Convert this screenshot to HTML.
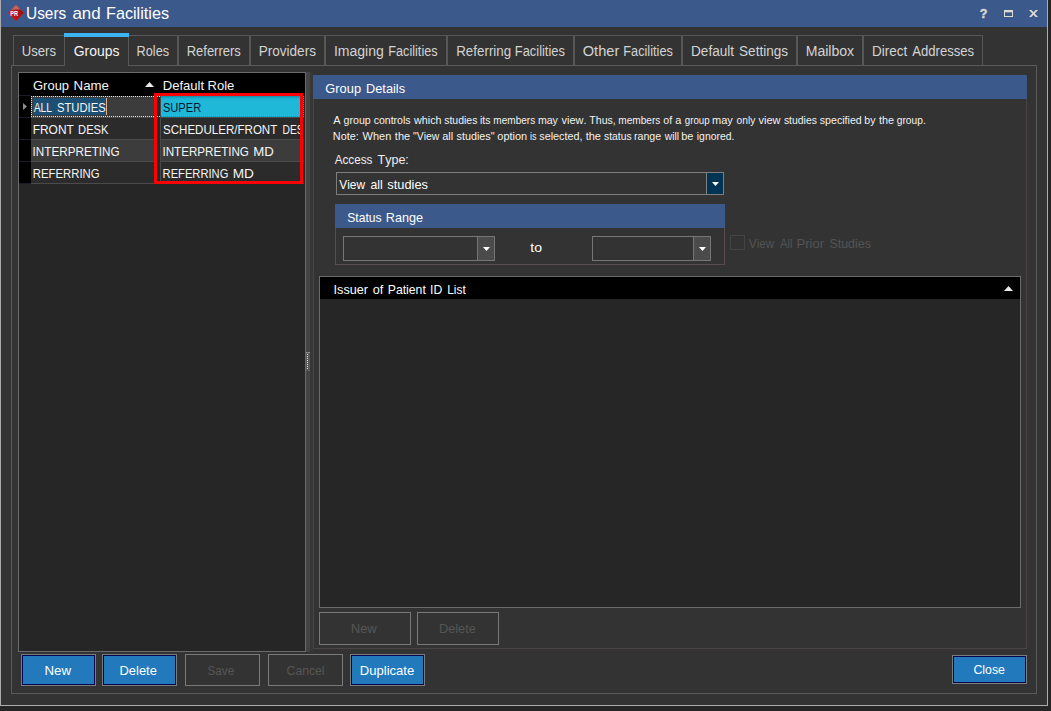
<!DOCTYPE html>
<html><head><meta charset="utf-8"><title>Users and Facilities</title>
<style>
html,body{margin:0;padding:0;background:#262626;}
body{width:1051px;height:711px;position:relative;overflow:hidden;font-family:"Liberation Sans", sans-serif;}
.b{position:absolute;display:block;}
.t{position:absolute;white-space:pre;line-height:20px;font-family:"Liberation Sans", sans-serif;transform-origin:0 0;font-kerning:none;}
</style></head><body>
<div class="b" style="left:0px;top:0px;width:1051px;height:711px;background:#262626;"></div>
<div class="b" style="left:0px;top:0px;width:1048px;height:706px;background:#333333;"></div>
<div class="b" style="left:0px;top:0px;width:1px;height:706px;background:#aaaaaa;"></div>
<div class="b" style="left:1047px;top:0px;width:1px;height:706px;background:#acacac;"></div>
<div class="b" style="left:0px;top:705px;width:1048px;height:1px;background:#acacac;"></div>
<div class="b" style="left:1px;top:0px;width:1046px;height:27px;background:#3c598b;"></div>
<svg class="b" style="left:6px;top:3px" width="20" height="20" viewBox="0 0 20 20"><defs><linearGradient id="g" x1="0" y1="0.6" x2="1" y2="0.4"><stop offset="0" stop-color="#cf1616"/><stop offset="0.5" stop-color="#b51515"/><stop offset="1" stop-color="#941010"/></linearGradient><linearGradient id="g2" x1="0" y1="0" x2="0" y2="1"><stop offset="0" stop-color="#c67878"/><stop offset="1" stop-color="#b45656"/></linearGradient></defs><path d="M10 1.9 L18 9.9 L10 17.9 L2 9.9 Z" fill="url(#g)" stroke="#b33030" stroke-width="0.5" stroke-linejoin="round"/><path d="M10 2.1 L14.3 6.3 L4.8 7.2 Z" fill="url(#g2)"/><text x="8.1" y="12.7" font-family="Liberation Sans, sans-serif" font-weight="700" font-size="6.6" fill="#fff" text-anchor="middle" textLength="7.8" lengthAdjust="spacingAndGlyphs">PR</text></svg>
<svg class="b" style="left:975px;top:5px" width="70" height="18" viewBox="0 0 70 18"><text x="8.5" y="13" font-family="Liberation Sans, sans-serif" font-weight="700" font-size="12.5" fill="#dedad4" stroke="#dedad4" stroke-width="0.35" text-anchor="middle">?</text><rect x="29.5" y="5.5" width="8" height="6" fill="none" stroke="#dedad4" stroke-width="1"/><rect x="29" y="5" width="9" height="2.3" fill="#dedad4"/><path d="M54 5 L56.4 5 L63 12 L60.6 12 Z" fill="#dedad4"/><path d="M63 5 L60.6 5 L54 12 L56.4 12 Z" fill="#dedad4"/></svg>
<div class="b" style="left:11px;top:65px;width:1026px;height:629px;border:1px solid #5a5a5a;box-sizing:border-box;"></div>
<div class="b" style="left:13px;top:35px;width:51px;height:1px;background:#575757;"></div>
<div class="b" style="left:13px;top:35px;width:1px;height:30px;background:#575757;"></div>
<div class="b" style="left:129px;top:35px;width:49px;height:1px;background:#575757;"></div>
<div class="b" style="left:177px;top:35px;width:1px;height:30px;background:#575757;"></div>
<div class="b" style="left:178px;top:35px;width:72px;height:1px;background:#575757;"></div>
<div class="b" style="left:178px;top:35px;width:1px;height:30px;background:#575757;"></div>
<div class="b" style="left:249px;top:35px;width:1px;height:30px;background:#575757;"></div>
<div class="b" style="left:250px;top:35px;width:75px;height:1px;background:#575757;"></div>
<div class="b" style="left:250px;top:35px;width:1px;height:30px;background:#575757;"></div>
<div class="b" style="left:324px;top:35px;width:1px;height:30px;background:#575757;"></div>
<div class="b" style="left:325px;top:35px;width:122px;height:1px;background:#575757;"></div>
<div class="b" style="left:325px;top:35px;width:1px;height:30px;background:#575757;"></div>
<div class="b" style="left:446px;top:35px;width:1px;height:30px;background:#575757;"></div>
<div class="b" style="left:447px;top:35px;width:127px;height:1px;background:#575757;"></div>
<div class="b" style="left:447px;top:35px;width:1px;height:30px;background:#575757;"></div>
<div class="b" style="left:573px;top:35px;width:1px;height:30px;background:#575757;"></div>
<div class="b" style="left:574px;top:35px;width:108px;height:1px;background:#575757;"></div>
<div class="b" style="left:574px;top:35px;width:1px;height:30px;background:#575757;"></div>
<div class="b" style="left:681px;top:35px;width:1px;height:30px;background:#575757;"></div>
<div class="b" style="left:682px;top:35px;width:115px;height:1px;background:#575757;"></div>
<div class="b" style="left:682px;top:35px;width:1px;height:30px;background:#575757;"></div>
<div class="b" style="left:796px;top:35px;width:1px;height:30px;background:#575757;"></div>
<div class="b" style="left:797px;top:35px;width:66px;height:1px;background:#575757;"></div>
<div class="b" style="left:797px;top:35px;width:1px;height:30px;background:#575757;"></div>
<div class="b" style="left:862px;top:35px;width:1px;height:30px;background:#575757;"></div>
<div class="b" style="left:863px;top:35px;width:120px;height:1px;background:#575757;"></div>
<div class="b" style="left:863px;top:35px;width:1px;height:30px;background:#575757;"></div>
<div class="b" style="left:982px;top:35px;width:1px;height:30px;background:#575757;"></div>
<div class="b" style="left:64px;top:33px;width:65px;height:33px;background:#333333;"></div>
<div class="b" style="left:64px;top:33px;width:65px;height:4px;background:#3db4f2;"></div>
<div class="b" style="left:64px;top:37px;width:1px;height:29px;background:#575757;"></div>
<div class="b" style="left:128px;top:37px;width:1px;height:29px;background:#575757;"></div>
<div class="b" style="left:18px;top:72px;width:288px;height:580px;background:#262626;border:1px solid #6b6b6b;box-sizing:border-box;"></div>
<div class="b" style="left:19px;top:73px;width:286px;height:23px;background:#000;"></div>
<div class="b" style="left:19px;top:96px;width:12px;height:22px;background:#000;"></div>
<div class="b" style="left:31px;top:96px;width:273px;height:22px;background:#3c3c3c;"></div>
<div class="b" style="left:19px;top:117px;width:12px;height:1px;background:#1a1a2a;"></div>
<div class="b" style="left:31px;top:117px;width:273px;height:1px;background:#4a4a4a;"></div>
<div class="b" style="left:19px;top:118px;width:12px;height:22px;background:#000;"></div>
<div class="b" style="left:31px;top:118px;width:273px;height:22px;background:#2b2b2b;"></div>
<div class="b" style="left:19px;top:139px;width:12px;height:1px;background:#1a1a2a;"></div>
<div class="b" style="left:31px;top:139px;width:273px;height:1px;background:#4a4a4a;"></div>
<div class="b" style="left:19px;top:140px;width:12px;height:22px;background:#000;"></div>
<div class="b" style="left:31px;top:140px;width:273px;height:22px;background:#3c3c3c;"></div>
<div class="b" style="left:19px;top:161px;width:12px;height:1px;background:#1a1a2a;"></div>
<div class="b" style="left:31px;top:161px;width:273px;height:1px;background:#4a4a4a;"></div>
<div class="b" style="left:19px;top:162px;width:12px;height:22px;background:#000;"></div>
<div class="b" style="left:31px;top:162px;width:273px;height:22px;background:#2b2b2b;"></div>
<div class="b" style="left:19px;top:183px;width:12px;height:1px;background:#1a1a2a;"></div>
<div class="b" style="left:31px;top:183px;width:273px;height:1px;background:#4a4a4a;"></div>
<div class="b" style="left:19px;top:95px;width:12px;height:1px;background:#1a1a2a;"></div>
<div class="b" style="left:157px;top:96px;width:3px;height:88px;background:#232626;"></div>
<div class="b" style="left:160px;top:96px;width:1px;height:88px;background:#484848;"></div>
<div class="b" style="left:33px;top:98px;width:73px;height:17px;background:#1c4f73;"></div>
<div class="b" style="left:106px;top:98px;width:1px;height:17px;background:#e3b08c;"></div>
<div class="b" style="left:161px;top:96px;width:142px;height:21px;background:linear-gradient(#158fae 0,#1797b5 1px,#1cabcb 2px,#1fb4d5 3px,#20b8d9 5px);"></div>
<div class="b" style="left:31px;top:96px;width:130px;height:1px;background:repeating-linear-gradient(90deg,#e6e6e6 0 1px,transparent 1px 2px);"></div>
<div class="b" style="left:31px;top:116px;width:130px;height:1px;background:repeating-linear-gradient(90deg,#e6e6e6 0 1px,transparent 1px 2px);"></div>
<div class="b" style="left:161px;top:96px;width:143px;height:1px;background:repeating-linear-gradient(90deg,#e8481c 0 1px,transparent 1px 2px);"></div>
<div class="b" style="left:161px;top:116px;width:143px;height:1px;background:repeating-linear-gradient(90deg,#e8481c 0 1px,transparent 1px 2px);"></div>
<div class="b" style="left:31px;top:96px;width:1px;height:21px;background:repeating-linear-gradient(180deg,#e6e6e6 0 1px,transparent 1px 2px);"></div>
<div class="b" style="left:303px;top:96px;width:1px;height:21px;background:#262626;"></div>
<div class="b" style="left:303px;top:96px;width:1px;height:21px;background:repeating-linear-gradient(180deg,#1a9cb8 0 1px,transparent 1px 2px);"></div>
<svg class="b" style="left:22px;top:102px" width="6" height="10"><path d="M1 1 L5 4.5 L1 8 Z" fill="#8c8c8c"/></svg>
<svg class="b" style="left:144px;top:82px" width="11" height="6"><path d="M1 5 L5.5 0 L10 5 Z" fill="#ececec"/></svg>
<div class="b" style="left:154px;top:93px;width:149px;height:91px;box-sizing:border-box;border:3px solid #ff0000;"></div>
<div class="b" style="left:306px;top:72px;width:4px;height:580px;background:#444444;"></div>
<div class="b" style="left:310px;top:72px;width:3px;height:580px;background:#373737;"></div>
<div class="b" style="left:306px;top:352px;width:4px;height:19px;background:#5a5a5a;"></div>
<div class="b" style="left:307px;top:354px;width:1px;height:1px;background:#e0e0e0;"></div>
<div class="b" style="left:307px;top:356px;width:1px;height:1px;background:#e0e0e0;"></div>
<div class="b" style="left:307px;top:358px;width:1px;height:1px;background:#e0e0e0;"></div>
<div class="b" style="left:307px;top:360px;width:1px;height:1px;background:#e0e0e0;"></div>
<div class="b" style="left:307px;top:362px;width:1px;height:1px;background:#e0e0e0;"></div>
<div class="b" style="left:307px;top:364px;width:1px;height:1px;background:#e0e0e0;"></div>
<div class="b" style="left:307px;top:366px;width:1px;height:1px;background:#e0e0e0;"></div>
<div class="b" style="left:307px;top:368px;width:1px;height:1px;background:#e0e0e0;"></div>
<div class="b" style="left:306px;top:352px;width:4px;height:1px;background:#8a8a8a;"></div>
<div class="b" style="left:313px;top:75px;width:714px;height:574px;border:1px solid #4a4444;box-sizing:border-box;"></div>
<div class="b" style="left:313px;top:75px;width:714px;height:24px;background:#3c598b;"></div>
<div class="b" style="left:336px;top:172px;width:388px;height:23px;border:1px solid #7f7c7a;box-sizing:border-box;"></div>
<div class="b" style="left:707px;top:173px;width:16px;height:21px;background:#003454;"></div>
<div class="b" style="left:706px;top:173px;width:1px;height:21px;background:#808080;"></div>
<svg class="b" style="left:712px;top:182px" width="7" height="4"><path d="M0 0 L7 0 L3.5 4 Z" fill="#fff"/></svg>
<div class="b" style="left:335px;top:204px;width:390px;height:61px;border:1px solid #584c4c;box-sizing:border-box;"></div>
<div class="b" style="left:335px;top:204px;width:390px;height:24px;background:#3c598b;"></div>
<div class="b" style="left:343px;top:236px;width:152px;height:25px;border:1px solid #767676;box-sizing:border-box;"></div>
<div class="b" style="left:478px;top:237px;width:16px;height:23px;background:#4b4b4b;"></div>
<div class="b" style="left:477px;top:237px;width:1px;height:23px;background:#767676;"></div>
<svg class="b" style="left:483px;top:247px" width="7" height="4"><path d="M0 0 L7 0 L3.5 4 Z" fill="#fff"/></svg>
<div class="b" style="left:592px;top:236px;width:119px;height:25px;border:1px solid #767676;box-sizing:border-box;"></div>
<div class="b" style="left:694px;top:237px;width:16px;height:23px;background:#4b4b4b;"></div>
<div class="b" style="left:693px;top:237px;width:1px;height:23px;background:#767676;"></div>
<svg class="b" style="left:699px;top:247px" width="7" height="4"><path d="M0 0 L7 0 L3.5 4 Z" fill="#fff"/></svg>
<div class="b" style="left:730px;top:235px;width:15px;height:15px;border:1px solid #444444;box-sizing:border-box;"></div>
<div class="b" style="left:319px;top:276px;width:702px;height:332px;background:#262626;border:1px solid #6b6b6b;box-sizing:border-box;"></div>
<div class="b" style="left:320px;top:277px;width:700px;height:22px;background:#000;"></div>
<svg class="b" style="left:1003px;top:286px" width="11" height="6"><path d="M1 5 L5.5 0 L10 5 Z" fill="#ececec"/></svg>
<div class="b" style="left:319px;top:612px;width:92px;height:33px;border:1px solid #797979;box-sizing:border-box;"></div>
<div class="b" style="left:417px;top:612px;width:82px;height:33px;border:1px solid #797979;box-sizing:border-box;"></div>
<div class="b" style="left:21px;top:654px;width:75px;height:32px;background:#2279bc;border:1px solid #7c7c7c;box-sizing:border-box;box-shadow:inset 0 0 0 1px #06064e;"></div>
<div class="b" style="left:102px;top:654px;width:75px;height:32px;background:#2279bc;border:1px solid #7c7c7c;box-sizing:border-box;box-shadow:inset 0 0 0 1px #06064e;"></div>
<div class="b" style="left:185px;top:654px;width:75px;height:32px;border:1px solid #797979;box-sizing:border-box;"></div>
<div class="b" style="left:268px;top:654px;width:75px;height:32px;border:1px solid #797979;box-sizing:border-box;"></div>
<div class="b" style="left:350px;top:654px;width:75px;height:32px;background:#2279bc;border:1px solid #7c7c7c;box-sizing:border-box;box-shadow:inset 0 0 0 1px #06064e;"></div>
<div class="b" style="left:952px;top:655px;width:75px;height:29px;background:#2279bc;border:1px solid #7c7c7c;box-sizing:border-box;box-shadow:inset 0 0 0 1px #06064e;"></div>
<div class="t" style="left:26px;top:4px;font-size:17px;color:#ffffff;transform:translateX(0.01px) scaleX(0.9066);">Users </div>
<div class="t" style="left:72px;top:4px;font-size:17px;color:#ffffff;transform:translateX(0.38px) scaleX(0.9983);">and </div>
<div class="t" style="left:105px;top:4px;font-size:17px;color:#ffffff;transform:translateX(0.97px) scaleX(0.9545);">Facilities</div>
<div class="t" style="left:21px;top:41px;font-size:14px;color:#d4d4d4;transform:translateX(0.69px) scaleX(0.9379);">Users</div>
<div class="t" style="left:73px;top:41px;font-size:14px;color:#f4f4f4;transform:translateX(0.70px) scaleX(0.9955);">Groups</div>
<div class="t" style="left:136px;top:41px;font-size:14px;color:#d4d4d4;transform:translateX(0.56px) scaleX(0.9081);">Roles</div>
<div class="t" style="left:186px;top:41px;font-size:14px;color:#d4d4d4;transform:translateX(0.63px) scaleX(0.9296);">Referrers</div>
<div class="t" style="left:258px;top:41px;font-size:14px;color:#d4d4d4;transform:translateX(0.79px) scaleX(0.9656);">Providers</div>
<div class="t" style="left:333px;top:41px;font-size:14px;color:#d4d4d4;transform:translateX(0.91px) scaleX(1.0018);">Imaging </div>
<div class="t" style="left:388px;top:41px;font-size:14px;color:#d4d4d4;transform:translateX(0.36px) scaleX(0.9034);">Facilities</div>
<div class="t" style="left:456px;top:41px;font-size:14px;color:#d4d4d4;transform:translateX(0.20px) scaleX(0.9545);">Referring </div>
<div class="t" style="left:514px;top:41px;font-size:14px;color:#d4d4d4;transform:translateX(0.85px) scaleX(0.9185);">Facilities</div>
<div class="t" style="left:582px;top:41px;font-size:14px;color:#d4d4d4;transform:translateX(0.71px) scaleX(1.0434);">Other </div>
<div class="t" style="left:623px;top:41px;font-size:14px;color:#d4d4d4;transform:translateX(0.25px) scaleX(0.9110);">Facilities</div>
<div class="t" style="left:690px;top:41px;font-size:14px;color:#d4d4d4;transform:translateX(0.98px) scaleX(0.9720);">Default </div>
<div class="t" style="left:739px;top:41px;font-size:14px;color:#d4d4d4;transform:translateX(0.09px) scaleX(0.9667);">Settings</div>
<div class="t" style="left:805px;top:41px;font-size:14px;color:#d4d4d4;transform:translateX(0.65px) scaleX(1.0055);">Mailbox</div>
<div class="t" style="left:872px;top:41px;font-size:14px;color:#d4d4d4;transform:translateX(0.09px) scaleX(0.9630);">Direct </div>
<div class="t" style="left:912px;top:41px;font-size:14px;color:#d4d4d4;transform:translateX(0.27px) scaleX(0.9358);">Addresses</div>
<div class="t" style="left:33px;top:76px;font-size:13px;color:#f6f6f6;transform:translateX(0.05px) scaleX(0.9962);">Group </div>
<div class="t" style="left:73px;top:76px;font-size:13px;color:#f6f6f6;transform:translateX(0.61px) scaleX(1.0202);">Name</div>
<div class="t" style="left:162px;top:76px;font-size:13px;color:#f6f6f6;transform:translateX(0.73px) scaleX(1.0043);">Default </div>
<div class="t" style="left:207px;top:76px;font-size:13px;color:#f6f6f6;transform:translateX(0.53px) scaleX(1.0003);">Role</div>
<div class="t" style="left:33px;top:98px;font-size:13px;color:#f6f6f6;transform:translateX(0.68px) scaleX(0.7983);">ALL </div>
<div class="t" style="left:56px;top:98px;font-size:13px;color:#f6f6f6;transform:translateX(0.99px) scaleX(0.8630);">STUDIES</div>
<div class="t" style="left:32px;top:120px;font-size:13px;color:#f6f6f6;transform:translateX(0.72px) scaleX(0.9169);">FRONT </div>
<div class="t" style="left:78px;top:120px;font-size:13px;color:#f6f6f6;transform:translateX(0.08px) scaleX(0.8599);">DESK</div>
<div class="t" style="left:32px;top:142px;font-size:13px;color:#f6f6f6;transform:translateX(0.62px) scaleX(0.8984);">INTERPRETING</div>
<div class="t" style="left:32px;top:164px;font-size:13px;color:#f6f6f6;transform:translateX(0.77px) scaleX(0.8722);">REFERRING</div>
<div class="t" style="left:162px;top:98px;font-size:13px;color:#06162f;transform:translateX(0.89px) scaleX(0.8556);">SUPER</div>
<div class="t" style="left:162px;top:120px;font-size:13px;color:#f6f6f6;transform:translateX(0.98px) scaleX(0.8890);">SCHEDULER/FRONT </div>
<div class="b" style="left:282px;top:120px;width:17.5px;height:20px;overflow:hidden;"><div class="t" style="left:0;top:0;font-size:13px;color:#f6f6f6;transform:translateX(0.46px) scaleX(0.7910);">DESK</div></div>
<div class="t" style="left:162px;top:142px;font-size:13px;color:#f6f6f6;transform:translateX(0.43px) scaleX(0.8931);">INTERPRETING </div>
<div class="t" style="left:253px;top:142px;font-size:13px;color:#f6f6f6;transform:translateX(0.22px) scaleX(1.0146);">MD</div>
<div class="t" style="left:162px;top:164px;font-size:13px;color:#f6f6f6;transform:translateX(0.58px) scaleX(0.8588);">REFERRING </div>
<div class="t" style="left:232px;top:164px;font-size:13px;color:#f6f6f6;transform:translateX(0.78px) scaleX(1.0470);">MD</div>
<div class="t" style="left:325px;top:79px;font-size:13px;color:#fff;transform:translateX(0.35px) scaleX(0.9877);">Group </div>
<div class="t" style="left:366px;top:79px;font-size:13px;color:#fff;transform:translateX(0.05px) scaleX(0.9817);">Details</div>
<div class="t" style="left:333px;top:110px;font-size:11px;color:#f2f2f2;transform:translateX(0.18px) scaleX(1.0000);">A </div>
<div class="t" style="left:343px;top:110px;font-size:11px;color:#f2f2f2;transform:translateX(0.55px) scaleX(0.9651);">group </div>
<div class="t" style="left:373px;top:110px;font-size:11px;color:#f2f2f2;transform:translateX(0.65px) scaleX(0.9598);">controls </div>
<div class="t" style="left:414px;top:110px;font-size:11px;color:#f2f2f2;transform:translateX(0.02px) scaleX(0.9782);">which </div>
<div class="t" style="left:444px;top:110px;font-size:11px;color:#f2f2f2;transform:translateX(0.21px) scaleX(0.9523);">studies </div>
<div class="t" style="left:479px;top:110px;font-size:11px;color:#f2f2f2;transform:translateX(0.90px) scaleX(0.9533);">its </div>
<div class="t" style="left:493px;top:110px;font-size:11px;color:#f2f2f2;transform:translateX(0.33px) scaleX(0.9121);">members </div>
<div class="t" style="left:537px;top:110px;font-size:11px;color:#f2f2f2;transform:translateX(0.90px) scaleX(0.9607);">may </div>
<div class="t" style="left:561px;top:110px;font-size:11px;color:#f2f2f2;transform:translateX(0.46px) scaleX(0.9994);">view. </div>
<div class="t" style="left:589px;top:110px;font-size:11px;color:#f2f2f2;transform:translateX(0.36px) scaleX(0.9586);">Thus, </div>
<div class="t" style="left:618px;top:110px;font-size:11px;color:#f2f2f2;transform:translateX(0.23px) scaleX(0.9182);">members </div>
<div class="t" style="left:663px;top:110px;font-size:11px;color:#f2f2f2;transform:translateX(0.35px) scaleX(0.9648);">of </div>
<div class="t" style="left:675px;top:110px;font-size:11px;color:#f2f2f2;transform:translateX(0.13px) scaleX(1.0000);">a </div>
<div class="t" style="left:684px;top:110px;font-size:11px;color:#f2f2f2;transform:translateX(0.79px) scaleX(0.8817);">group </div>
<div class="t" style="left:711px;top:110px;font-size:11px;color:#f2f2f2;transform:translateX(0.97px) scaleX(1.0000);">may </div>
<div class="t" style="left:736px;top:110px;font-size:11px;color:#f2f2f2;transform:translateX(0.57px) scaleX(0.9253);">only </div>
<div class="t" style="left:758px;top:110px;font-size:11px;color:#f2f2f2;transform:translateX(0.46px) scaleX(1.0000);">view </div>
<div class="t" style="left:783px;top:110px;font-size:11px;color:#f2f2f2;transform:translateX(0.91px) scaleX(0.9470);">studies </div>
<div class="t" style="left:819px;top:110px;font-size:11px;color:#f2f2f2;transform:translateX(0.80px) scaleX(0.9662);">specified </div>
<div class="t" style="left:864px;top:110px;font-size:11px;color:#f2f2f2;transform:translateX(0.32px) scaleX(0.9609);">by </div>
<div class="t" style="left:878px;top:110px;font-size:11px;color:#f2f2f2;transform:translateX(0.94px) scaleX(0.9865);">the </div>
<div class="t" style="left:896px;top:110px;font-size:11px;color:#f2f2f2;transform:translateX(0.77px) scaleX(0.9286);">group.</div>
<div class="t" style="left:332px;top:126px;font-size:11px;color:#f2f2f2;transform:translateX(0.81px) scaleX(0.9847);">Note: </div>
<div class="t" style="left:362px;top:126px;font-size:11px;color:#f2f2f2;transform:translateX(0.55px) scaleX(1.0000);">When </div>
<div class="t" style="left:394px;top:126px;font-size:11px;color:#f2f2f2;transform:translateX(0.83px) scaleX(1.0000);">the </div>
<div class="t" style="left:413px;top:126px;font-size:11px;color:#f2f2f2;transform:translateX(0.06px) scaleX(0.9447);">&quot;View </div>
<div class="t" style="left:442px;top:126px;font-size:11px;color:#f2f2f2;transform:translateX(0.13px) scaleX(1.0000);">all </div>
<div class="t" style="left:456px;top:126px;font-size:11px;color:#f2f2f2;transform:translateX(0.50px) scaleX(0.9805);">studies&quot; </div>
<div class="t" style="left:497px;top:126px;font-size:11px;color:#f2f2f2;transform:translateX(0.34px) scaleX(0.9931);">option </div>
<div class="t" style="left:529px;top:126px;font-size:11px;color:#f2f2f2;transform:translateX(1.00px) scaleX(0.8182);">is </div>
<div class="t" style="left:539px;top:126px;font-size:11px;color:#f2f2f2;transform:translateX(0.30px) scaleX(0.9812);">selected, </div>
<div class="t" style="left:585px;top:126px;font-size:11px;color:#f2f2f2;transform:translateX(0.63px) scaleX(1.0000);">the </div>
<div class="t" style="left:604px;top:126px;font-size:11px;color:#f2f2f2;transform:translateX(0.01px) scaleX(0.9382);">status </div>
<div class="t" style="left:633px;top:126px;font-size:11px;color:#f2f2f2;transform:translateX(1.00px) scaleX(0.9651);">range </div>
<div class="t" style="left:664px;top:126px;font-size:11px;color:#f2f2f2;transform:translateX(0.82px) scaleX(0.9328);">will </div>
<div class="t" style="left:681px;top:126px;font-size:11px;color:#f2f2f2;transform:translateX(0.19px) scaleX(1.0000);">be </div>
<div class="t" style="left:696px;top:126px;font-size:11px;color:#f2f2f2;transform:translateX(0.81px) scaleX(0.9445);">ignored.</div>
<div class="t" style="left:334px;top:150px;font-size:13px;color:#f0f0f0;transform:translateX(0.68px) scaleX(0.8984);">Access </div>
<div class="t" style="left:377px;top:150px;font-size:13px;color:#f0f0f0;transform:translateX(0.52px) scaleX(0.9635);">Type:</div>
<div class="t" style="left:339px;top:175px;font-size:13px;color:#fff;transform:translateX(0.25px) scaleX(0.9165);">View </div>
<div class="t" style="left:370px;top:175px;font-size:13px;color:#fff;transform:translateX(0.38px) scaleX(0.9409);">all </div>
<div class="t" style="left:387px;top:175px;font-size:13px;color:#fff;transform:translateX(0.34px) scaleX(0.9862);">studies</div>
<div class="t" style="left:347px;top:208px;font-size:13px;color:#fff;transform:translateX(0.25px) scaleX(0.9331);">Status </div>
<div class="t" style="left:385px;top:208px;font-size:13px;color:#fff;transform:translateX(0.76px) scaleX(0.9710);">Range</div>
<div class="t" style="left:530px;top:238px;font-size:13px;color:#fff;transform:translateX(0.29px) scaleX(1.0793);">to</div>
<div class="t" style="left:748px;top:234px;font-size:13px;color:#545454;transform:translateX(0.85px) scaleX(0.9022);">View </div>
<div class="t" style="left:780px;top:234px;font-size:13px;color:#545454;transform:translateX(0.08px) scaleX(0.8633);">All </div>
<div class="t" style="left:796px;top:234px;font-size:13px;color:#545454;transform:translateX(0.53px) scaleX(1.0013);">Prior </div>
<div class="t" style="left:829px;top:234px;font-size:13px;color:#545454;transform:translateX(0.43px) scaleX(0.9574);">Studies</div>
<div class="t" style="left:333px;top:280px;font-size:13px;color:#fff;transform:translateX(0.53px) scaleX(0.9739);">Issuer </div>
<div class="t" style="left:372px;top:280px;font-size:13px;color:#fff;transform:translateX(0.77px) scaleX(0.9695);">of </div>
<div class="t" style="left:387px;top:280px;font-size:13px;color:#fff;transform:translateX(0.80px) scaleX(0.9387);">Patient </div>
<div class="t" style="left:430px;top:280px;font-size:13px;color:#fff;transform:translateX(0.07px) scaleX(0.9393);">ID </div>
<div class="t" style="left:447px;top:280px;font-size:13px;color:#fff;transform:translateX(0.23px) scaleX(0.9125);">List</div>
<div class="t" style="left:350px;top:619px;font-size:13px;color:#565656;transform:translateX(0.73px) scaleX(1.0011);">New</div>
<div class="t" style="left:438px;top:619px;font-size:13px;color:#565656;transform:translateX(0.95px) scaleX(0.9824);">Delete</div>
<div class="t" style="left:44px;top:661px;font-size:13px;color:#fff;transform:translateX(0.41px) scaleX(1.0212);">New</div>
<div class="t" style="left:119px;top:661px;font-size:13px;color:#fff;transform:translateX(0.54px) scaleX(0.9935);">Delete</div>
<div class="t" style="left:207px;top:661px;font-size:13px;color:#565656;transform:translateX(0.57px) scaleX(0.8959);">Save</div>
<div class="t" style="left:286px;top:661px;font-size:13px;color:#565656;transform:translateX(0.58px) scaleX(0.9374);">Cancel</div>
<div class="t" style="left:359px;top:661px;font-size:13px;color:#fff;transform:translateX(0.83px) scaleX(1.0028);">Duplicate</div>
<div class="t" style="left:973px;top:660px;font-size:13px;color:#fff;transform:translateX(0.47px) scaleX(0.9469);">Close</div>
</body></html>
